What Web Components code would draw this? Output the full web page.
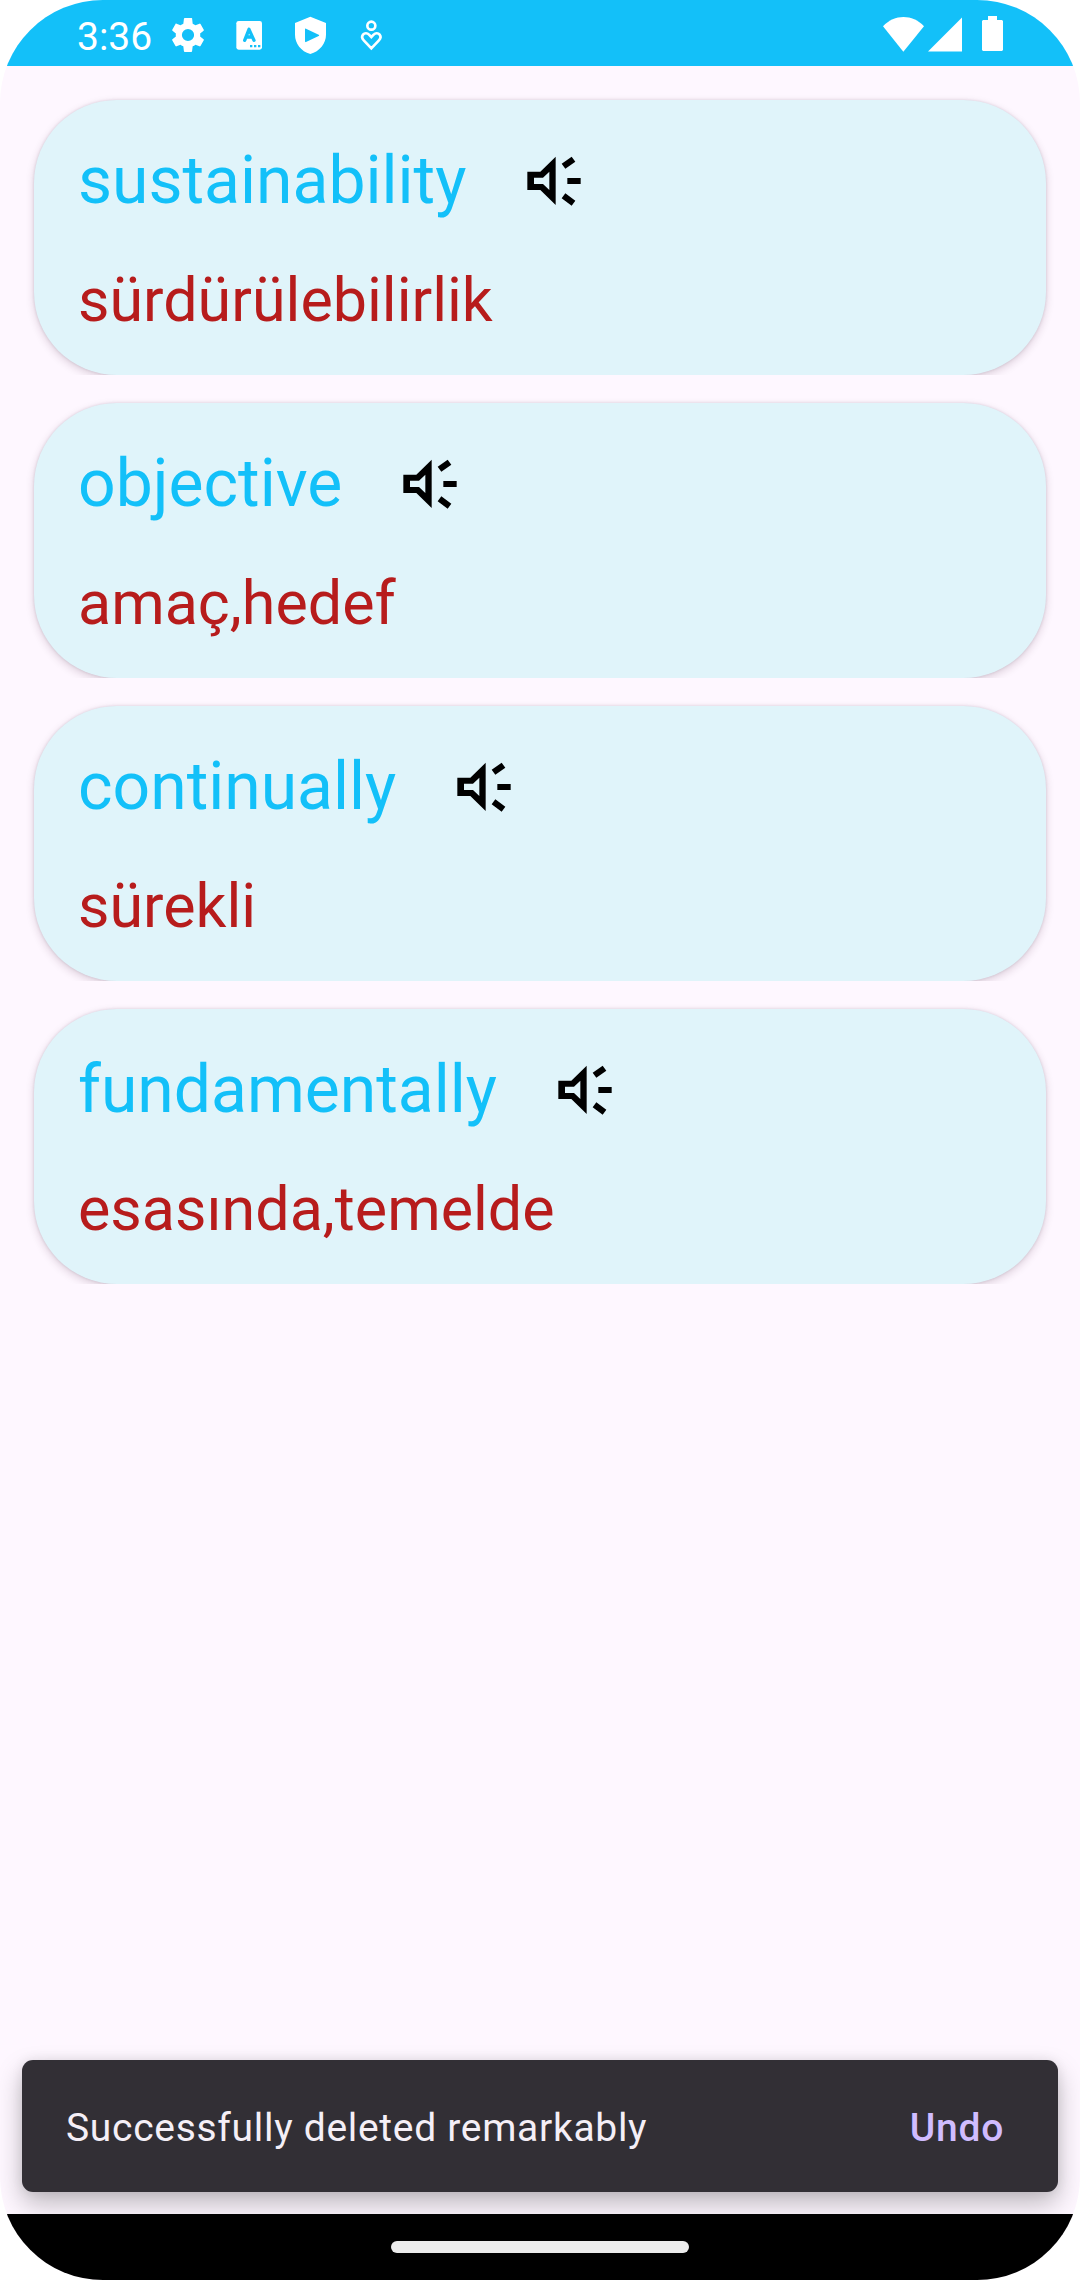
<!DOCTYPE html>
<html lang="tr">
<head>
<meta charset="utf-8">
<meta name="viewport" content="width=device-width, initial-scale=1">
<title>Word list</title>
<style>
  html { background: #fff; }
  body { margin: 0; font-family: Roboto, "Noto Sans", sans-serif; }
</style>
</head>
<body>
<phone-screen>
  <status-bar slot="status" time="3:36"></status-bar>
  <word-list>
    <word-card><span slot="word" lang="en">sustainability</span><span slot="meaning">sürdürülebilirlik</span></word-card>
    <word-card><span slot="word" lang="en">objective</span><span slot="meaning">amaç,hedef</span></word-card>
    <word-card><span slot="word" lang="en">continually</span><span slot="meaning">sürekli</span></word-card>
    <word-card><span slot="word" lang="en">fundamentally</span><span slot="meaning">esasında,temelde</span></word-card>
  </word-list>
  <snack-bar slot="snack" lang="en">Successfully deleted remarkably<span slot="action">Undo</span></snack-bar>
  <nav-bar slot="nav"></nav-bar>
</phone-screen>
<script>
const define = (name, html) => customElements.define(name, class extends HTMLElement {
  constructor() {
    super();
    this.attachShadow({ mode: 'open' }).innerHTML = html;
  }
  connectedCallback() {
    const time = this.shadowRoot.querySelector('time');
    if (time) time.textContent = this.getAttribute('time');
  }
});

define('phone-screen', `
<style>
  :host { display: flex; flex-direction: column; min-height: 100vh; overflow: hidden; border-radius: 103px; background: #fef7ff; }
  main { flex: 1; }
</style>
<slot name="status"></slot>
<main><slot></slot></main>
<slot name="snack"></slot>
<slot name="nav"></slot>`);

define('status-bar', `
<style>
  :host { display: flex; justify-content: space-between; align-items: center; height: 66px; padding: 4px 77px 0; box-sizing: border-box; background: #13c0f9; color: #fff; }
  .left, .icons, .right { display: flex; align-items: center; }
  .left { gap: 15px; }
  .icons { gap: 19px; }
  time { padding-top: 4px; font-size: 39px; line-height: 46px; }
  svg { display: block; height: 42px; fill: #fff; }
  .gear { padding: 4px; box-sizing: border-box; }
  .signal { margin-left: 4px; }
  .battery { margin-left: 20px; }
</style>
<div class="left">
  <time></time>
  <div class="icons">
  <svg class="gear" width="42" viewBox="2 2 20 20"><path d="M19.14 12.94c.04-.3.06-.61.06-.94 0-.32-.02-.64-.07-.94l2.03-1.58a.49.49 0 0 0 .12-.61l-1.92-3.32a.488.488 0 0 0-.59-.22l-2.39.96c-.5-.38-1.03-.7-1.62-.94L14.4 2.2a.48.48 0 0 0-.48-.2h-3.84c-.24 0-.43.17-.47.41l-.36 2.94c-.59.24-1.13.57-1.62.94l-2.39-.96c-.22-.08-.47 0-.59.22L2.74 8.87c-.12.21-.08.47.12.61l2.03 1.58c-.05.3-.09.63-.09.94s.02.64.07.94l-2.03 1.58a.49.49 0 0 0-.12.61l1.92 3.32c.12.22.37.29.59.22l2.39-.96c.5.38 1.03.7 1.62.94l.36 2.94c.05.24.24.41.48.41h3.84c.24 0 .44-.17.47-.41l.36-2.94c.59-.24 1.13-.56 1.62-.94l2.39.96c.22.08.47 0 .59-.22l1.92-3.32a.49.49 0 0 0-.12-.61zM12 15.6A3.6 3.6 0 1 1 12 8.4a3.6 3.6 0 0 1 0 7.200z"/></svg>
  <svg width="42" viewBox="684 42 126 126"><rect x="709" y="63" width="77" height="86" rx="7"/><g fill="none" stroke="#13c0f9" stroke-linecap="round" stroke-linejoin="round"><path stroke-width="10" d="M734 121l13-33 15 33M739 111h18"/></g><path fill="#13c0f9" d="M750 135h7v7h-7zM762 135h7v7h-7zM774 135h7v7h-7z"/></svg>
  <svg width="42" viewBox="867 42 126 126"><path fill-rule="evenodd" d="M931 50l47 19v35c0 26-19 50-47 58-28-8-46-32-46-58V69zM918 86c-2-1-3 0-3 2v36c0 2 1 3 3 2l38-18c2-1 2-3 0-4z"/></svg>
  <svg width="42" viewBox="1050 42 126 126"><g fill="none" stroke="#fff" stroke-width="8"><circle cx="1114" cy="77" r="12"/><path d="M1114 145l-22-23c-7-7-7-13-3-18 5-6 13-5 18 0l7 7 7-7c5-5 13-6 18 0 4 5 4 11-3 18z"/></g></svg>
  </div>
</div>
<div class="right">
  <svg width="41" viewBox="129 42 123 126"><path d="M129 79c35-37 88-37 123 0l-62 76z"/></svg>
  <svg class="signal" width="34" viewBox="263 42 103 126"><path d="M263 155h103V52z"/></svg>
  <svg class="battery" width="21" viewBox="426 42 63 126"><path d="M444 48h27v12h15l3 3v87l-3 3h-57l-3-3V63l3-3h15z"/></svg>
</div>`);

define('word-list', `
<style>
  :host { display: flex; flex-direction: column; gap: 28px; padding: 34px; }
</style>
<slot></slot>`);

define('word-card', `
<style>
  :host { display: block; padding: 42px 44px 39px; border-radius: 83px; background: #e0f4fa; box-shadow: 0 3px 8px rgba(60,20,50,.18), 0 0 3px rgba(60,20,50,.14); clip-path: inset(-12px -20px 0); }
  .row { display: flex; align-items: center; gap: 55px; }
  .word { font-size: 66px; line-height: 77px; color: #13c0f9; }
  .meaning { margin-top: 46px; font-size: 61px; line-height: 71px; color: #b71c1c; }
  button { padding: 0; border: 0; background: none; cursor: pointer; }
  svg { display: block; width: 66px; height: 66px; }
</style>
<div class="row">
  <div class="word"><slot name="word"></slot></div>
  <button type="button" aria-label="Listen"><svg viewBox="63 54 198 198"><path fill-rule="evenodd" d="M82 125h39l46-45v145l-46-45H82zM102 143v19h27l19 18v-55l-19 18zM202 144h40v18h-40zM185 101l30-21 11 15-30 21zM185 205l11-15 30 22-11 15z"/></svg></button>
</div>
<div class="meaning"><slot name="meaning"></slot></div>`);

define('snack-bar', `
<style>
  :host { display: flex; align-items: center; justify-content: space-between; margin: 0 22px 22px; padding: 45px 54px 41px 44px; border-radius: 11px; background: #322f35; color: #f5eff7; box-shadow: 0 12px 26px rgba(0,0,0,.25), 0 0 12px rgba(0,0,0,.08); font-size: 39px; line-height: 46px; letter-spacing: 0.018em; }
  button { padding: 0; border: 0; background: none; color: #d0bcff; font: inherit; font-weight: 500; letter-spacing: inherit; cursor: pointer; }
</style>
<span role="status"><slot></slot></span>
<button type="button"><slot name="action"></slot></button>`);

define('nav-bar', `
<style>
  :host { display: flex; justify-content: center; align-items: center; position: relative; height: 66px; background: #000; }
  i { width: 298px; height: 12px; border-radius: 6px; background: #ececec; }
</style>
<i></i>`);
</script>
</body>
</html>
